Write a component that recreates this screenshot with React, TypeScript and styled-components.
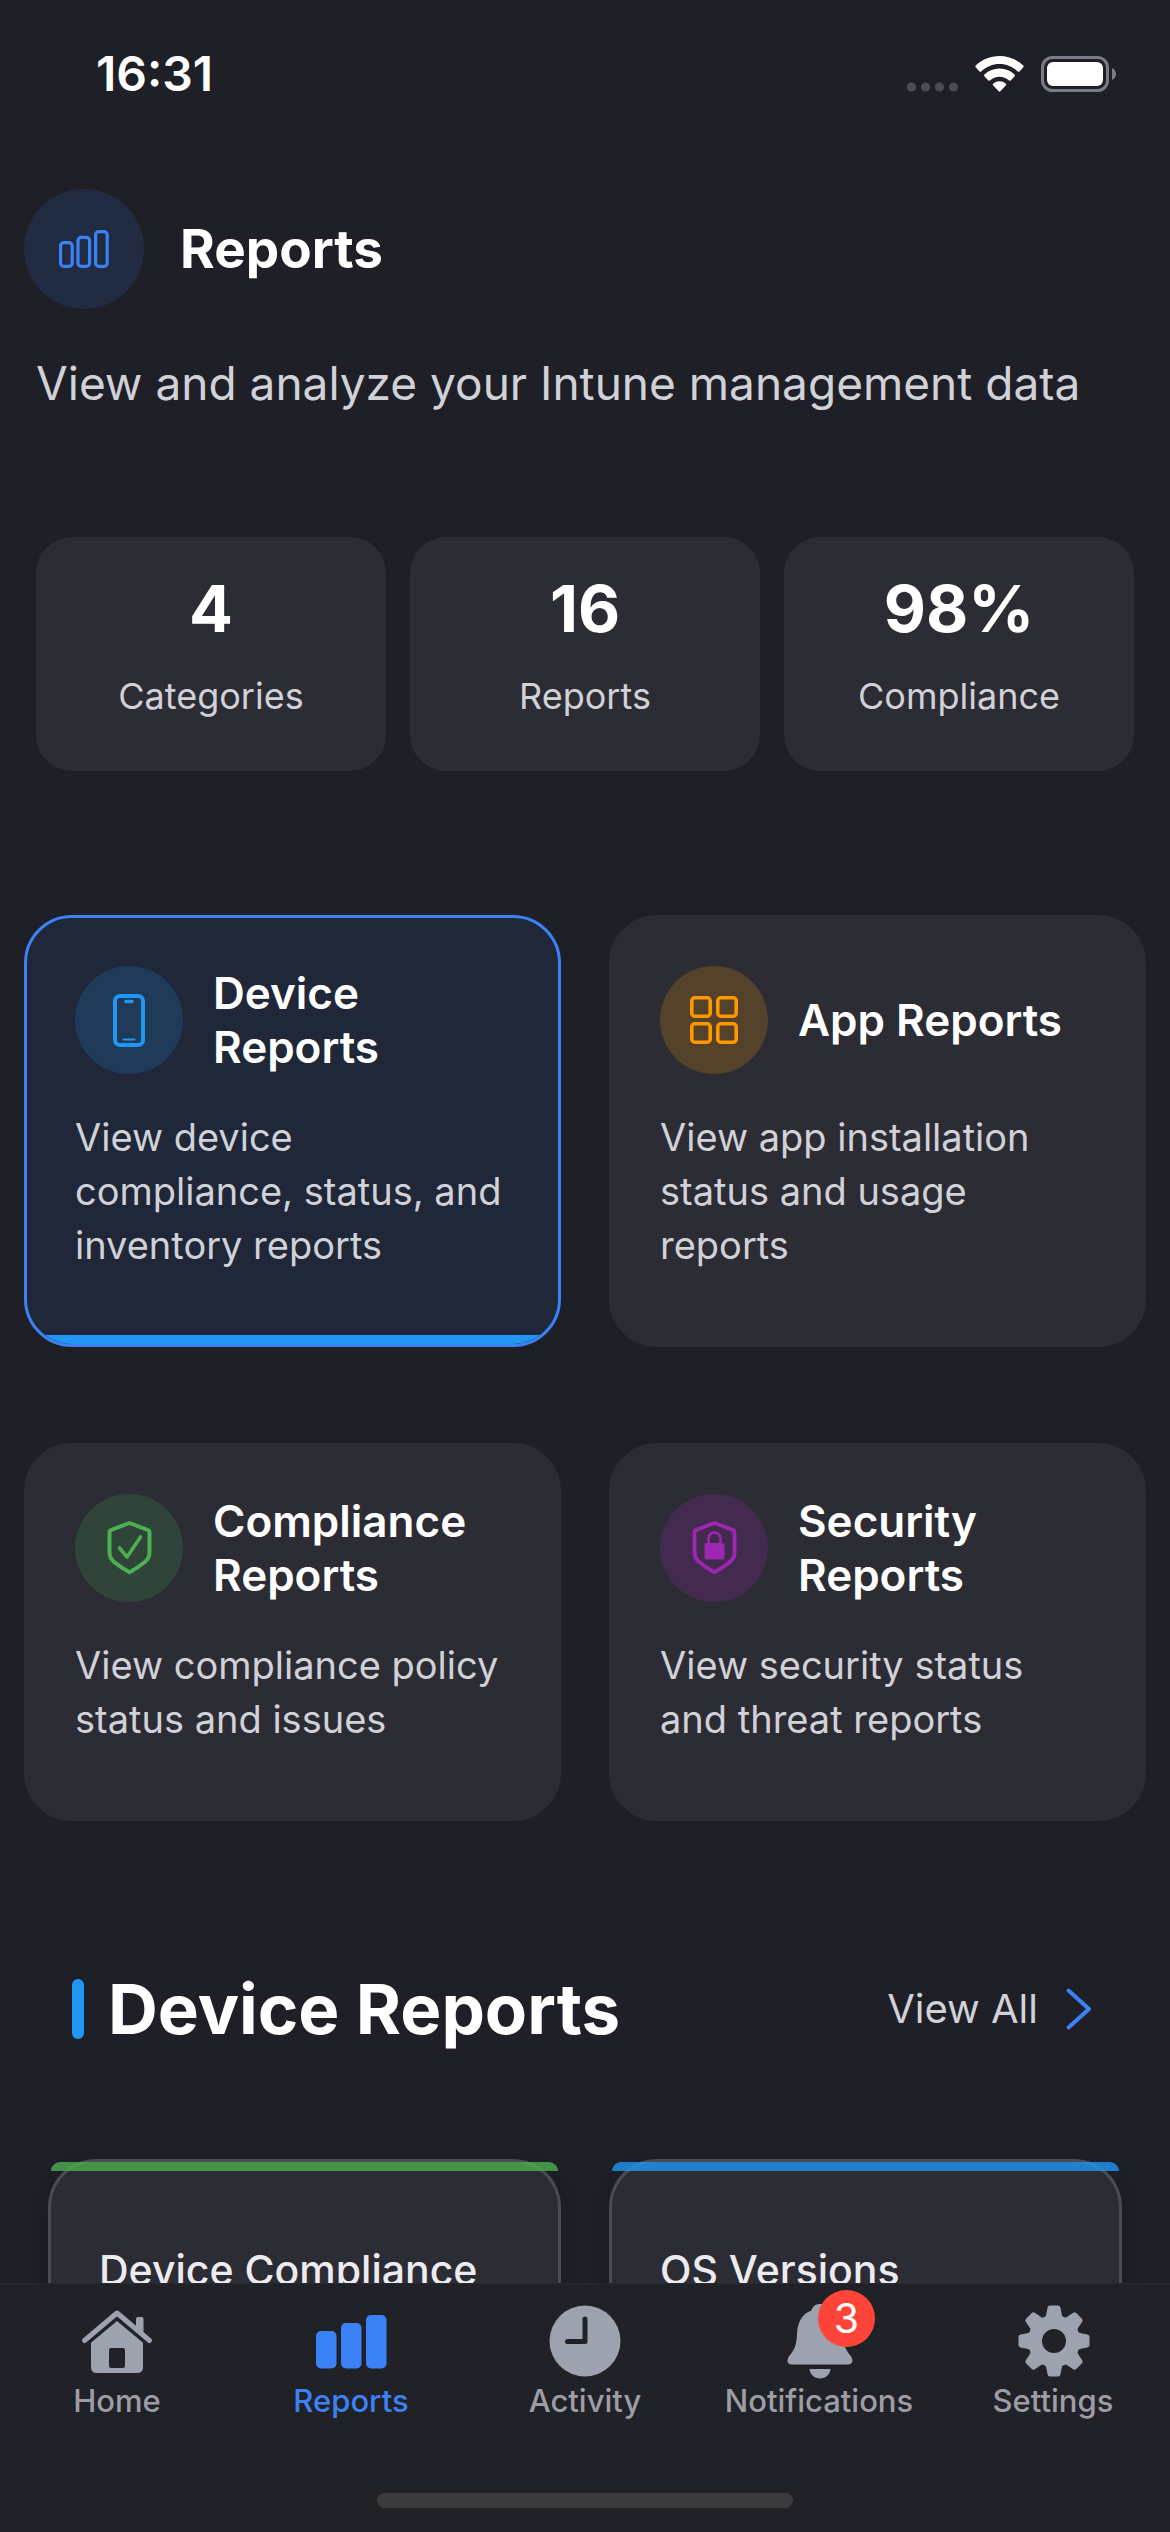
import React, { useState } from "react";
import styled, { createGlobalStyle } from "styled-components";

const color = {
  background: "#1f1f28",
  card: "#2c2c35",
  cardActive: "#1f2738",
  tabBar: "#212228",
  text: "#ffffff",
  textMuted: "#d1d1d8",
  textSoft: "#ececf0",
  tabIcon: "#9ca3af",
  tabLabel: "#9d9ea5",
  primary: "#3b82f6",
  blue: "#2196f3",
  orange: "#ff9800",
  green: "#4caf50",
  purple: "#9c27b0",
  badge: "#ff453a",
};

const GlobalStyle = createGlobalStyle`
  * {
    box-sizing: border-box;
  }
  body {
    margin: 0;
    background: ${color.background};
    color: ${color.text};
    font-family: Inter, "Liberation Sans", sans-serif;
  }
  h1, h2, h3, p, dl, dt, dd {
    margin: 0;
  }
  button {
    margin: 0;
    border: 0;
    padding: 0;
    background: none;
    color: inherit;
    font: inherit;
    text-align: left;
    cursor: pointer;
  }
  a {
    color: inherit;
    text-decoration: none;
  }
  svg {
    display: block;
    flex: none;
    overflow: visible;
  }
`;

const Screen = styled.div`
  display: flex;
  flex-direction: column;
  height: 100vh;
`;

const StatusBar = styled.header`
  display: flex;
  align-items: center;
  justify-content: space-between;
  padding: 45px 54px 44px 96px;
`;

const Clock = styled.time`
  font-size: 48px;
  line-height: 58px;
  font-weight: 600;
`;

const StatusIcons = styled.div`
  display: flex;
  align-items: center;
  gap: 17px;
`;

const Content = styled.main`
  flex: 1;
  min-height: 0;
  overflow-y: auto;
  scrollbar-width: none;
  padding-top: 42px;
`;

const Intro = styled.section`
  padding: 0 24px;
`;

const TitleRow = styled.div`
  display: flex;
  align-items: center;
  gap: 36px;
`;

const RoundIcon = styled.span<{ $size: number; $fill: string; $ink: string }>`
  display: flex;
  flex: none;
  align-items: center;
  justify-content: center;
  width: ${(p) => p.$size}px;
  height: ${(p) => p.$size}px;
  border-radius: 50%;
  background: ${(p) => p.$fill};
  color: ${(p) => p.$ink};
`;

const PageTitle = styled.h1`
  font-size: 53px;
  line-height: 66px;
  font-weight: 700;
`;

const Subtitle = styled.p`
  padding: 44px 12px 0;
  color: ${color.textMuted};
  font-size: 46px;
  line-height: 60px;
`;

const Stats = styled.dl`
  display: grid;
  grid-template-columns: repeat(3, 1fr);
  gap: 24px;
  padding: 124px 36px 0;
`;

const Stat = styled.div`
  display: flex;
  flex-direction: column-reverse;
  align-items: center;
  gap: 30px;
  padding: 36px 24px 54px;
  border-radius: 36px;
  background: ${color.card};
`;

const StatValue = styled.dd`
  font-size: 65px;
  line-height: 72px;
  font-weight: 700;
`;

const StatLabel = styled.dt`
  color: ${color.textMuted};
  font-size: 36px;
  line-height: 42px;
`;

const Categories = styled.section`
  display: grid;
  grid-template-columns: repeat(2, 1fr);
  gap: 96px 48px;
  padding: 144px 24px;
`;

const Category = styled.button<{ $active: boolean }>`
  position: relative;
  display: flex;
  flex-direction: column;
  justify-content: flex-start;
  gap: 36px;
  overflow: hidden;
  border: 3px solid ${(p) => (p.$active ? color.primary : color.card)};
  border-radius: 48px;
  padding: 48px 48px 72px;
  background: ${(p) => (p.$active ? color.cardActive : color.card)};
`;

const CategoryHead = styled.span`
  display: flex;
  align-items: center;
  gap: 30px;
`;

const CategoryTitle = styled.span`
  font-size: 44px;
  line-height: 54px;
  font-weight: 600;
`;

const CategoryText = styled.span`
  color: ${color.textMuted};
  font-size: 38px;
  line-height: 54px;
`;

const ActiveBar = styled.span`
  position: absolute;
  right: 0;
  bottom: 0;
  left: 0;
  height: 9px;
  background: ${color.blue};
`;

const SectionHead = styled.div`
  display: flex;
  align-items: center;
  justify-content: space-between;
  padding: 2px 78px 108px 72px;
`;

const SectionTitle = styled.h2`
  display: flex;
  align-items: center;
  gap: 24px;
  font-size: 69px;
  line-height: 84px;
  font-weight: 700;

  &::before {
    content: "";
    width: 12px;
    height: 60px;
    border-radius: 6px;
    background: ${color.blue};
  }
`;

const ViewAll = styled.a`
  display: flex;
  align-items: center;
  gap: 28px;
  color: ${color.textMuted};
  font-size: 40px;
  line-height: 54px;

  svg {
    color: ${color.primary};
  }
`;

const Reports = styled.div`
  display: grid;
  grid-template-columns: repeat(2, 1fr);
  gap: 48px;
  padding: 0 48px 48px;
`;

const Report = styled.article`
  position: relative;
  border: 3px solid rgba(255, 255, 255, 0.15);
  border-radius: 48px;
  padding: 81px 48px;
  background: ${color.card};
  box-shadow: 0 6px 18px rgba(0, 0, 0, 0.2);
`;

const ReportStrip = styled.span<{ $ink: string }>`
  position: absolute;
  top: 0;
  right: 0;
  left: 0;
  height: 9px;
  border-radius: 9px 9px 0 0;
  background: ${(p) => p.$ink};
  opacity: 0.8;
`;

const ReportTitle = styled.h3`
  color: ${color.textSoft};
  font-size: 41px;
  line-height: 54px;
  font-weight: 500;
`;

const BottomBar = styled.footer`
  border-top: 1px solid #282930;
  padding: 21px 0 24px;
  background: ${color.tabBar};
`;

const Tabs = styled.nav`
  display: grid;
  grid-template-columns: repeat(5, 1fr);
`;

const Tab = styled.button<{ $active: boolean }>`
  display: flex;
  flex-direction: column;
  align-items: center;
  gap: 6px;
  color: ${(p) => (p.$active ? color.primary : color.tabIcon)};
`;

const TabIcon = styled.span`
  position: relative;
`;

const TabLabel = styled.span<{ $active: boolean }>`
  color: ${(p) => (p.$active ? color.primary : color.tabLabel)};
  font-size: 31px;
  line-height: 36px;
  font-weight: 500;
`;

const Badge = styled.span`
  position: absolute;
  top: -15px;
  left: 35px;
  width: 57px;
  height: 57px;
  border-radius: 50%;
  background: ${color.badge};
  color: ${color.text};
  font-size: 41px;
  line-height: 57px;
  text-align: center;
`;

const HomeIndicator = styled.div`
  width: 416px;
  max-width: 60%;
  height: 15px;
  margin: 74px auto 0;
  border-radius: 8px;
  background: #3b3b3e;
`;

const SignalIcon = () => (
  <svg width="51" height="36" viewBox="0 0 51 36" fill="#4c4c54" aria-hidden="true">
    {[4.5, 18.5, 32.5, 46.5].map((cx) => (
      <circle key={cx} cx={cx} cy="31" r="4.6" />
    ))}
  </svg>
);

const WifiIcon = () => (
  <svg width="49" height="36" viewBox="0 0 49 36" fill="#fff" aria-hidden="true">
    <path d="M24.5 0C15.4 0 7.100 3.500 1 9.300c-.8.7-.8 1.600-.1 2.300l3.400 3.600c.7.700 1.500.7 2.200 0C11.300 10.700 17.600 8 24.500 8s13.200 2.700 18 7.200c.7.700 1.500.7 2.200 0l3.400-3.600c.7-.7.700-1.600-.1-2.300C41.900 3.500 33.600 0 24.500 0Z" />
    <path d="M24.500 12.600c-5.700 0-10.900 2.200-14.800 5.700-.8.7-.8 1.600-.1 2.300l3.500 3.600c.7.700 1.400.7 2.200.1 2.500-2.200 5.700-3.500 9.200-3.500s6.700 1.300 9.200 3.500c.8.6 1.500.6 2.200-.1l3.500-3.600c.7-.7.7-1.600-.1-2.300-3.900-3.500-9.100-5.700-14.800-5.700Z" />
    <path d="M24.500 25.300c-2.300 0-4.400.8-6.100 2.100-.8.700-.8 1.500-.1 2.200l5.100 5.500c.7.700 1.500.7 2.200 0l5.100-5.500c.7-.7.7-1.500-.1-2.200-1.700-1.300-3.800-2.100-6.100-2.100Z" />
  </svg>
);

const BatteryIcon = () => (
  <svg width="75" height="36" viewBox="0 0 75 36" aria-hidden="true">
    <rect x="1.500" y="1.500" width="65" height="33" rx="10" fill="none" stroke="#7c7c84" strokeWidth="3" />
    <rect x="6" y="6" width="56" height="24" rx="6" fill="#fff" />
    <path d="M71 12c2.500 1 4 3.300 4 6s-1.500 5-4 6Z" fill="#7c7c84" />
  </svg>
);

const BarsOutlineIcon = () => (
  <svg width="50" height="38" viewBox="0 0 50 38" fill="none" stroke="currentColor" strokeWidth="3.200" aria-hidden="true">
    <rect x="1.600" y="12.600" width="11.600" height="23.800" rx="3.200" />
    <rect x="19" y="7.400" width="11.600" height="29" rx="3.200" />
    <rect x="36.600" y="1.600" width="11.600" height="34.800" rx="3.200" />
  </svg>
);

const PhoneIcon = () => (
  <svg width="32" height="53" viewBox="0 0 32 53" fill="none" stroke="currentColor" strokeLinecap="round" aria-hidden="true">
    <rect x="2" y="2" width="28" height="49" rx="5" strokeWidth="4" />
    <path d="M13 7.500h6" strokeWidth="3.600" />
    <path d="M10.500 45.500h11" strokeWidth="2" />
  </svg>
);

const GridIcon = () => (
  <svg width="48" height="48" viewBox="0 0 48 48" fill="none" stroke="currentColor" strokeWidth="3.600" aria-hidden="true">
    {[1.8, 27.8].map((y) =>
      [1.8, 27.8].map((x) => <rect key={`${x}-${y}`} x={x} y={y} width="18.400" height="18.400" rx="3" />)
    )}
  </svg>
);

const shieldPath =
  "M22.500 2 40.500 8.800Q42.500 9.600 42.500 11.500V31Q42.500 37.500 37.500 41.300 30.500 47 22.500 51.300 14.500 47 7.500 41.300 2.500 37.500 2.500 31V11.500Q2.500 9.600 4.500 8.800Z";

const ShieldCheckIcon = () => (
  <svg width="45" height="54" viewBox="0 0 45 54" fill="none" stroke="currentColor" strokeWidth="4" strokeLinecap="round" strokeLinejoin="round" aria-hidden="true">
    <path d={shieldPath} />
    <path d="m12.500 27 7.500 9L33.500 16" strokeWidth="3.600" />
  </svg>
);

const ShieldLockIcon = () => (
  <svg width="45" height="54" viewBox="0 0 45 54" fill="none" stroke="currentColor" strokeLinejoin="round" aria-hidden="true">
    <path d={shieldPath} strokeWidth="4" />
    <path d="M16.500 23v-5.500a6 6 0 0 1 12 0V23" strokeWidth="2.500" />
    <rect x="12.500" y="22" width="20" height="16.500" rx="2" fill="currentColor" stroke="none" />
  </svg>
);

const ChevronIcon = () => (
  <svg width="26" height="42" viewBox="0 0 26 42" fill="none" stroke="currentColor" strokeWidth="4" strokeLinecap="round" strokeLinejoin="round" aria-hidden="true">
    <path d="m2.500 2.500 20.500 18.500L2.500 39.500" />
  </svg>
);

const HomeIcon = () => (
  <svg width="72" height="72" viewBox="0 0 72 72" fill="currentColor" aria-hidden="true">
    <path d="M3.500 35.500 36 8l32.500 27.500" fill="none" stroke="currentColor" strokeWidth="5" strokeLinecap="round" strokeLinejoin="round" />
    <path d="M55 14q0-2 2-2h3.500q2 0 2 2v19L55 26.500Z" />
    <path fillRule="evenodd" d="M36 16 62 37.800V62q0 6-6 6H16q-6 0-6-6V37.800ZM30 43q-2 0-2 2v16q0 2 2 2h12q2 0 2-2V45q0-2-2-2Z" />
  </svg>
);

const BarsIcon = () => (
  <svg width="72" height="72" viewBox="0 0 72 72" fill="currentColor" aria-hidden="true">
    <rect x="1" y="26" width="20.500" height="37.500" rx="5" />
    <rect x="26" y="18" width="20.500" height="45.500" rx="5" />
    <rect x="51" y="10" width="20.500" height="53.500" rx="5" />
  </svg>
);

const ClockIcon = () => (
  <svg width="72" height="72" viewBox="0 0 72 72" aria-hidden="true">
    <circle cx="36" cy="36" r="35.500" fill="currentColor" />
    <path d="M36 14v22.500H18.500" fill="none" stroke={color.tabBar} strokeWidth="5" strokeLinecap="round" strokeLinejoin="round" />
  </svg>
);

const BellIcon = () => (
  <svg width="72" height="72" viewBox="0 0 72 72" fill="currentColor" aria-hidden="true">
    <path d="M37-1c-4.500 0-7.500 2.500-8.500 6.500C18.500 9 14.500 18 14 29c-.5 12-3 16-7 21-4 5-3 9.500 2 9.500h56c5 0 6-4.500 2-9.500-4-5-6.500-9-7-21-.5-11-4.500-20-14.500-23.500C44.500 1.500 41.500-1 37-1Z" />
    <path d="M26.500 64h21c-.5 5.500-5 9.500-10.500 9.500S27 69.500 26.500 64Z" />
  </svg>
);

const GearIcon = () => (
  <svg width="72" height="72" viewBox="0 0 72 72" fill="currentColor" aria-hidden="true">
    <circle cx="37" cy="36" r="19" fill="none" stroke="currentColor" strokeWidth="14" />
    {[0, 45, 90, 135, 180, 225, 270, 315].map((angle) => (
      <path
        key={angle}
        transform={`rotate(${angle} 37 36)`}
        d="M26 14c2-1 2.800-2.500 3.300-5L30.600 2.500q.4-2 2.400-2h8q2 0 2.400 2L44.700 9c.5 2.500 1.300 4 3.300 5Z"
      />
    ))}
  </svg>
);

const stats = [
  { label: "Categories", value: "4" },
  { label: "Reports", value: "16" },
  { label: "Compliance", value: "98%" },
];

const categories = [
  { title: "Device Reports", text: "View device compliance, status, and inventory reports", fill: "#1f3b59", ink: color.blue, Icon: PhoneIcon },
  { title: "App Reports", text: "View app installation status and usage reports", fill: "#54422b", ink: color.orange, Icon: GridIcon },
  { title: "Compliance Reports", text: "View compliance policy status and issues", fill: "#30443a", ink: color.green, Icon: ShieldCheckIcon },
  { title: "Security Reports", text: "View security status and threat reports", fill: "#422b4e", ink: color.purple, Icon: ShieldLockIcon },
];

const reports = [
  { title: "Device Compliance", ink: color.green },
  { title: "OS Versions", ink: color.blue },
];

const tabs = [
  { label: "Home", Icon: HomeIcon, badge: 0 },
  { label: "Reports", Icon: BarsIcon, badge: 0 },
  { label: "Activity", Icon: ClockIcon, badge: 0 },
  { label: "Notifications", Icon: BellIcon, badge: 3 },
  { label: "Settings", Icon: GearIcon, badge: 0 },
];

export default function App() {
  const [category, setCategory] = useState("Device Reports");
  const [tab, setTab] = useState("Reports");

  return (
    <Screen>
      <GlobalStyle />
      <StatusBar>
        <Clock>16:31</Clock>
        <StatusIcons>
          <SignalIcon />
          <WifiIcon />
          <BatteryIcon />
        </StatusIcons>
      </StatusBar>

      <Content>
        <Intro>
          <TitleRow>
            <RoundIcon $size={120} $fill="#212b41" $ink={color.primary}>
              <BarsOutlineIcon />
            </RoundIcon>
            <PageTitle>Reports</PageTitle>
          </TitleRow>
          <Subtitle>View and analyze your Intune management data</Subtitle>
        </Intro>

        <Stats>
          {stats.map((s) => (
            <Stat key={s.label}>
              <StatLabel>{s.label}</StatLabel>
              <StatValue>{s.value}</StatValue>
            </Stat>
          ))}
        </Stats>

        <Categories>
          {categories.map(({ title, text, fill, ink, Icon }) => (
            <Category key={title} type="button" $active={title === category} aria-pressed={title === category} onClick={() => setCategory(title)}>
              <CategoryHead>
                <RoundIcon $size={108} $fill={fill} $ink={ink}>
                  <Icon />
                </RoundIcon>
                <CategoryTitle>{title}</CategoryTitle>
              </CategoryHead>
              <CategoryText>{text}</CategoryText>
              {title === category && <ActiveBar />}
            </Category>
          ))}
        </Categories>

        <section>
          <SectionHead>
            <SectionTitle>{category}</SectionTitle>
            <ViewAll href="#all">
              View All
              <ChevronIcon />
            </ViewAll>
          </SectionHead>
          <Reports>
            {reports.map((r) => (
              <Report key={r.title}>
                <ReportStrip $ink={r.ink} />
                <ReportTitle>{r.title}</ReportTitle>
              </Report>
            ))}
          </Reports>
        </section>
      </Content>

      <BottomBar>
        <Tabs>
          {tabs.map(({ label, Icon, badge }) => (
            <Tab key={label} type="button" $active={label === tab} onClick={() => setTab(label)}>
              <TabIcon>
                <Icon />
                {badge > 0 && <Badge>{badge}</Badge>}
              </TabIcon>
              <TabLabel $active={label === tab}>{label}</TabLabel>
            </Tab>
          ))}
        </Tabs>
        <HomeIndicator />
      </BottomBar>
    </Screen>
  );
}
